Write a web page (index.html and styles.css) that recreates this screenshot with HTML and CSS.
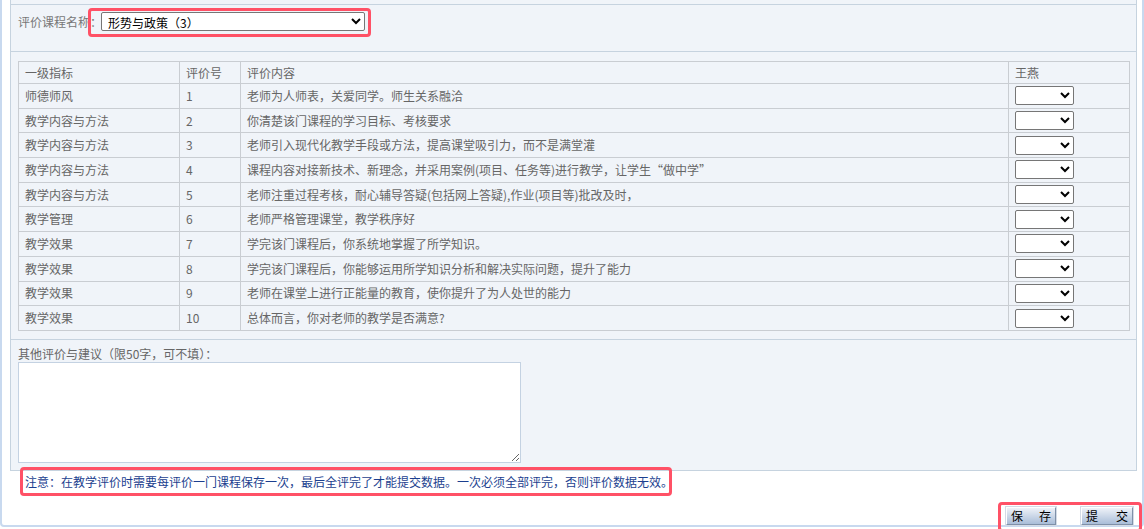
FILE: index.html
```html
<!DOCTYPE html>
<html lang="zh-CN">
<head>
<meta charset="utf-8">
<title>评价</title>
<link rel="stylesheet" href="styles.css">
</head>
<body>
<div class="frame">
  <div class="outer">
    <div class="panel">
      <div class="lead"></div>
      <div class="course-row">
        <span class="label">评价课程名称：</span>
        <select class="course-select"><option>形势与政策（3）</option></select>
      </div>
      <div class="table-row">
        <table class="eval">
          <colgroup><col class="c1"><col class="c2"><col class="c3"><col class="c4"></colgroup>
          <thead>
            <tr><th>一级指标</th><th>评价号</th><th>评价内容</th><th>王燕</th></tr>
          </thead>
          <tbody>
            <tr><td>师德师风</td><td>1</td><td>老师为人师表，关爱同学。师生关系融洽</td><td><select class="score"><option></option></select></td></tr>
            <tr><td>教学内容与方法</td><td>2</td><td>你清楚该门课程的学习目标、考核要求</td><td><select class="score"><option></option></select></td></tr>
            <tr><td>教学内容与方法</td><td>3</td><td>老师引入现代化教学手段或方法，提高课堂吸引力，而不是满堂灌</td><td><select class="score"><option></option></select></td></tr>
            <tr><td>教学内容与方法</td><td>4</td><td>课程内容对接新技术、新理念，并采用案例(项目、任务等)进行教学，让学生“做中学”</td><td><select class="score"><option></option></select></td></tr>
            <tr><td>教学内容与方法</td><td>5</td><td>老师注重过程考核，耐心辅导答疑(包括网上答疑),作业(项目等)批改及时，</td><td><select class="score"><option></option></select></td></tr>
            <tr><td>教学管理</td><td>6</td><td>老师严格管理课堂，教学秩序好</td><td><select class="score"><option></option></select></td></tr>
            <tr><td>教学效果</td><td>7</td><td>学完该门课程后，你系统地掌握了所学知识。</td><td><select class="score"><option></option></select></td></tr>
            <tr><td>教学效果</td><td>8</td><td>学完该门课程后，你能够运用所学知识分析和解决实际问题，提升了能力</td><td><select class="score"><option></option></select></td></tr>
            <tr><td>教学效果</td><td>9</td><td>老师在课堂上进行正能量的教育，使你提升了为人处世的能力</td><td><select class="score"><option></option></select></td></tr>
            <tr><td>教学效果</td><td>10</td><td>总体而言，你对老师的教学是否满意?</td><td><select class="score"><option></option></select></td></tr>
          </tbody>
        </table>
      </div>
      <div class="comment-row">
        <div class="label">其他评价与建议（限50字，可不填）：</div>
        <textarea class="comment"></textarea>
      </div>
    </div>
    <div class="notice">注意：在教学评价时需要每评价一门课程保存一次，最后全评完了才能提交数据。一次必须全部评完，否则评价数据无效。</div>
    <div class="actions">
      <button class="btn btn-save"><span>保</span><span>存</span></button>
      <button class="btn btn-submit"><span>提</span><span>交</span></button>
    </div>
  </div>
  <div class="mark mark-course"></div>
  <div class="mark mark-notice"></div>
  <div class="mark mark-actions"></div>
</div>
</body>
</html>
```
FILE: styles.css
```css
html, body {
  margin: 0;
  padding: 0;
  background: #ffffff;
}
body {
  font-family: "Noto Sans CJK SC", "Noto Sans", sans-serif;
  font-size: 12px;
  color: #666666;
}
.frame {
  position: relative;
  width: 1144px;
  height: 529px;
  overflow: hidden;
}
.outer {
  box-sizing: border-box;
  width: 1144px;
  height: 527px;
  border: 2px solid #c8d9ef;
  border-top: none;
  border-radius: 0 0 4px 4px;
  padding: 0 5px 0 8px;
}
.panel {
  background: #f0f4f9;
  border: 1px solid #c6d3df;
  border-top: none;
}
.lead {
  height: 4px;
}
.course-row {
  box-sizing: border-box;
  height: 47px;
  border-top: 1px solid #c6d3df;
  padding: 7px 0 0 7px;
  display: flex;
  align-items: flex-start;
}
.course-row .label {
  line-height: 19px;
  color: #777777;
}
.course-select {
  box-sizing: border-box;
  width: 264px;
  height: 19px;
  margin-left: -1px;
  font-family: "Noto Sans CJK SC", sans-serif;
  font-size: 12px;
  color: #000;
  background: #fff;
  border: 1px solid #767676;
  border-radius: 2px;
  padding: 0 0 0 2px;
}
.table-row {
  border-top: 1px solid #c6d3df;
  padding: 9px 0 8px 7px;
}
.eval {
  border-collapse: collapse;
  width: 1111px;
  table-layout: fixed;
  border: 1px solid #c9cdd2;
}
.eval col.c1 { width: 161px; }
.eval col.c2 { width: 61px; }
.eval col.c3 { width: 768px; }
.eval col.c4 { width: 121px; }
.eval th, .eval td {
  border: 1px solid #c9cdd2;
  padding: 0 0 0 6px;
  text-align: left;
  font-weight: normal;
  color: #666666;
  white-space: nowrap;
}
.eval th {
  height: 21px;
  line-height: 21px;
}
.eval td {
  height: 23.7px;
  line-height: 16px;
}
.score {
  box-sizing: border-box;
  display: block;
  width: 59px;
  height: 19px;
  font-size: 12px;
  background: #fff;
  border: 1px solid #767676;
  border-radius: 2px;
}
.comment-row {
  border-top: 1px solid #c6d3df;
  padding: 6px 0 7px 7px;
}
.comment-row .label {
  line-height: 16px;
  color: #666666;
}
.comment {
  display: block;
  box-sizing: border-box;
  width: 503px;
  height: 101px;
  margin: 0;
  border: 1px solid #c4d2e2;
  background: #fff;
}
.notice {
  margin: 3px 0 0 15px;
  line-height: 16px;
  color: #1c3f8f;
}
.actions {
  display: flex;
  justify-content: flex-end;
  gap: 25px;
  margin-top: 17px;
  padding-right: 4px;
}
.btn {
  box-sizing: border-box;
  display: flex;
  justify-content: space-between;
  align-items: center;
  height: 18px;
  padding: 0 4px;
  font-family: "Noto Sans CJK SC", sans-serif;
  font-size: 12px;
  color: #000;
  border: 1px solid;
  border-color: #ffffff #7f90a8 #7f90a8 #ffffff;
  background: linear-gradient(#eef2f8, #a9bdd8);
  outline: 1px solid #d3dbe6;
}
.btn-save { width: 50px; }
.btn-submit { width: 52px; }
.mark {
  position: absolute;
  box-sizing: border-box;
  border: 3px solid #ff5166;
  border-radius: 4px;
}
.mark-course { left: 88px; top: 8px; width: 283px; height: 29px; }
.mark-notice { left: 20px; top: 467px; width: 652px; height: 29px; }
.mark-actions { left: 998px; top: 502px; width: 144px; height: 30px; }
```
